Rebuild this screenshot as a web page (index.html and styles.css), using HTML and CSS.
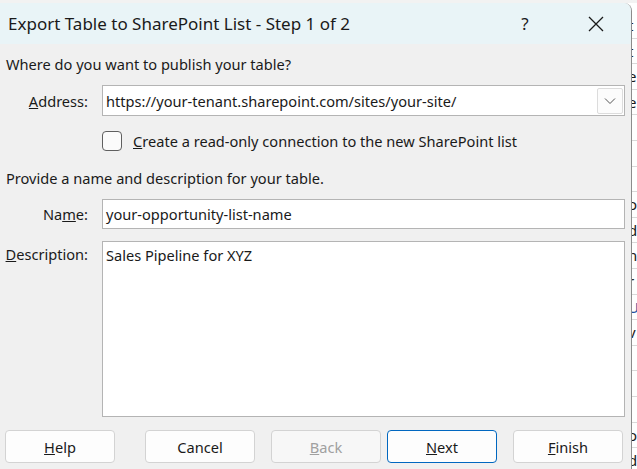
FILE: index.html
```html
<!DOCTYPE html>
<html lang="en">
<head>
<meta charset="utf-8">
<title>Export Table to SharePoint List</title>
<link rel="stylesheet" href="styles.css">
</head>
<body>
<div class="screen">
  <div class="dialog">
    <div class="titlebar">
      <span class="title">Export Table to SharePoint List - Step 1 of 2</span>
      <span class="help-q">?</span>
      <span class="close">
        <svg width="16" height="16" viewBox="0 0 16 16"><path d="M1 1 L15 15 M15 1 L1 15" stroke="#1a1a1a" stroke-width="1.3" fill="none"/></svg>
      </span>
    </div>
    <div class="content">
      <p class="section first">Where do you want to publish your table?</p>
      <div class="row">
        <label class="lbl"><u>A</u>ddress:</label>
        <div class="field combo">
          <span class="val">https://your-tenant.sharepoint.com/sites/your-site/</span>
          <span class="drop"><svg width="12" height="8" viewBox="0 0 12 8"><path d="M1 1.5 L6 6.5 L11 1.5" stroke="#555" stroke-width="1" fill="none"/></svg></span>
        </div>
      </div>
      <div class="check-row">
        <span class="checkbox"></span>
        <span class="check-label"><u>C</u>reate a read-only connection to the new SharePoint list</span>
      </div>
      <p class="section second">Provide a name and description for your table.</p>
      <div class="row name-row">
        <label class="lbl">Na<u>m</u>e:</label>
        <div class="field"><span class="val">your-opportunity-list-name</span></div>
      </div>
      <div class="row desc-row">
        <label class="lbl top"><u>D</u>escription:</label>
        <div class="field area"><span class="val">Sales Pipeline for XYZ</span></div>
      </div>
      <div class="buttons">
        <button class="btn"><u>H</u>elp</button>
        <button class="btn cancel">Cancel</button>
        <button class="btn disabled"><u>B</u>ack</button>
        <button class="btn primary"><u>N</u>ext</button>
        <button class="btn finish"><u>F</u>inish</button>
      </div>
    </div>
  </div>
  <div class="sheet">
    <div class="cell">t</div>
    <div class="cell">t</div>
    <div class="cell">e</div>
    <div class="cell">e</div>
    <div class="cell"></div>
    <div class="cell"></div>
    <div class="cell"></div>
    <div class="cell">o</div>
    <div class="cell">d</div>
    <div class="cell">n</div>
    <div class="cell">r</div>
    <div class="cell blue">U</div>
    <div class="cell">v</div>
    <div class="cell"></div>
    <div class="cell"></div>
    <div class="cell"></div>
    <div class="cell">o</div>
    <div class="cell">d</div>
  </div>
</div>
</body>
</html>
```

FILE: styles.css
```css
* { box-sizing: border-box; }
html, body {
  margin: 0;
  padding: 0;
}
body {
  background: #ffffff;
  font-family: "Noto Sans", "Open Sans", sans-serif;
  color: #1a1a1a;
  width: 637px;
  height: 469px;
  overflow: hidden;
}
.screen {
  display: flex;
  height: 469px;
  border-top: 3px solid #f2f2f2;
}
.dialog {
  width: 632px;
  flex: none;
  background: #f0f0f0;
  border-right: 1px solid #8c8c8c;
  border-top-right-radius: 8px;
  overflow: hidden;
}
.titlebar {
  height: 41px;
  background: #e9f4f7;
  display: flex;
  align-items: center;
}
.title {
  font-size: 17px;
  padding-left: 8px;
  flex: 1;
}
.help-q {
  font-size: 17px;
  width: 40px;
  text-align: center;
  color: #1a1a1a;
  margin-right: 26px;
}
.close {
  width: 60px;
  display: flex;
  justify-content: center;
  align-items: center;
  padding-right: 10px;
}
.content {
  padding: 0 6px 0 5px;
  font-size: 14.6px;
}
.section {
  margin: 0;
  line-height: 20px;
  padding-left: 1px;
}
.section.first { margin-top: 10px; }
.section.second { margin-top: 17px; }
.row {
  display: grid;
  grid-template-columns: 83px 1fr;
  column-gap: 14px;
  align-items: center;
  margin-top: 11px;
}
.lbl {
  text-align: right;
  line-height: 20px;
  white-space: nowrap;
}
.lbl.top {
  align-self: start;
  padding-top: 3px;
}
.field {
  height: 31px;
  background: #ffffff;
  border: 1px solid #b4b4b4;
  display: flex;
  align-items: center;
  padding-left: 3px;
}
.val {
  line-height: 20px;
  white-space: nowrap;
}
.combo .val { flex: 1; }
.drop {
  width: 26px;
  height: 26px;
  margin-right: 1px;
  border: 1px solid #dcdcdc;
  background: #fcfcfc;
  border-radius: 2px;
  display: flex;
  align-items: center;
  justify-content: center;
}
.name-row .field { height: 30px; }
.desc-row { margin-top: 12px; }
.field.area {
  height: 176px;
  align-items: flex-start;
  padding-top: 3px;
}
.check-row {
  display: flex;
  align-items: center;
  margin-top: 15px;
  padding-left: 97px;
  height: 20px;
}
.checkbox {
  width: 20px;
  height: 20px;
  border: 1px solid #5f5f5f;
  border-radius: 4px;
  background: #fbfbfb;
  margin-right: 11px;
}
.check-label { line-height: 20px; }
.buttons {
  display: flex;
  margin-top: 13px;
}
.btn {
  flex: none;
  width: 110px;
  height: 33px;
  font-family: inherit;
  font-size: 14.6px;
  color: #1a1a1a;
  background: #fdfdfd;
  border: 1px solid #d3d3d3;
  border-radius: 4px;
  padding: 0;
}
.btn.cancel { margin-left: 30px; }
.btn.disabled { margin-left: 16px; color: #a0a0a0; background: #f7f7f7; }
.btn.primary { margin-left: 6px; border-color: #0067c0; }
.btn.finish { margin-left: 16px; }
.sheet {
  flex: 1;
  overflow: hidden;
  background: #ffffff;
  padding-top: 10px;
}
.cell {
  height: 25.6px;
  border-bottom: 1px solid #d9d9d9;
  font-size: 15px;
  line-height: 25px;
  margin-left: -4px;
  color: #1a1a1a;
}
.cell.blue { color: #1f4fa0; }
```
